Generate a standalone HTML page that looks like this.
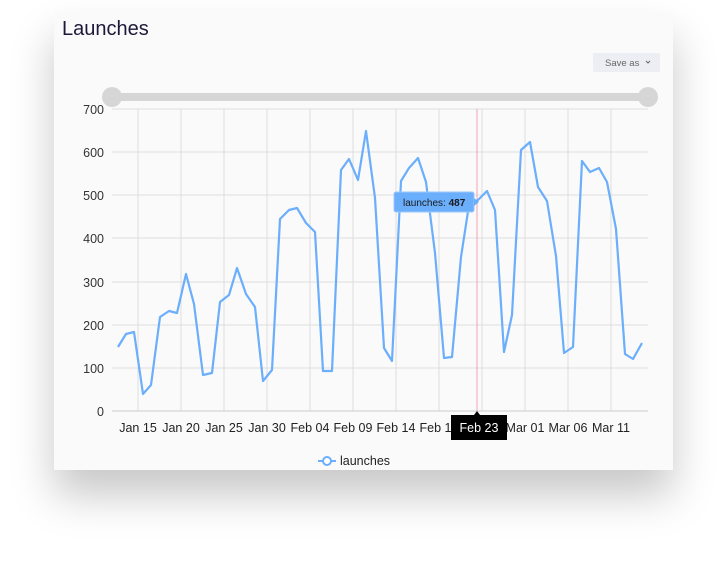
<!DOCTYPE html>
<html><head><style>
body{margin:0;width:728px;height:566px;background:#fff;font-family:"Liberation Sans",sans-serif;overflow:hidden}
.card{position:absolute;left:54px;top:12px;width:619px;height:458px;background:#fafafa;box-shadow:0 25px 40px rgba(0,0,0,0.22)}
</style></head><body>
<div class="card"></div>
<svg width="728" height="566" style="position:absolute;left:0;top:0" font-family="Liberation Sans, sans-serif">
<text x="62" y="35" font-size="20" fill="#1e1838">Launches</text>
<rect x="593" y="53" width="67" height="19" rx="2" fill="#eceef3"/>
<text x="605" y="66" font-size="9.5" fill="#666">Save as</text>
<path d="M646 61l2 2 2-2" stroke="#666" fill="none"/>
<g stroke="#ddd" stroke-width="1">
<line x1="112" y1="109" x2="648" y2="109"/><line x1="112" y1="152" x2="648" y2="152"/><line x1="112" y1="195" x2="648" y2="195"/><line x1="112" y1="238" x2="648" y2="238"/><line x1="112" y1="282" x2="648" y2="282"/><line x1="112" y1="325" x2="648" y2="325"/><line x1="112" y1="368" x2="648" y2="368"/>
<line x1="138" y1="109" x2="138" y2="411"/><line x1="181" y1="109" x2="181" y2="411"/><line x1="224" y1="109" x2="224" y2="411"/><line x1="267" y1="109" x2="267" y2="411"/><line x1="310" y1="109" x2="310" y2="411"/><line x1="353" y1="109" x2="353" y2="411"/><line x1="396" y1="109" x2="396" y2="411"/><line x1="439" y1="109" x2="439" y2="411"/><line x1="482" y1="109" x2="482" y2="411"/><line x1="525" y1="109" x2="525" y2="411"/><line x1="568" y1="109" x2="568" y2="411"/><line x1="611" y1="109" x2="611" y2="411"/>
</g>
<line x1="112" y1="411" x2="648" y2="411" stroke="#ccc"/>
<rect x="112" y="93" width="536" height="8" fill="#d6d6d6"/>
<circle cx="112" cy="97" r="10" fill="#d6d6d6"/><circle cx="648" cy="97" r="10" fill="#d6d6d6"/>
<g font-size="12.5" fill="#333" text-anchor="end">
<text x="104" y="114">700</text><text x="104" y="157">600</text><text x="104" y="200">500</text><text x="104" y="243">400</text><text x="104" y="287">300</text><text x="104" y="330">200</text><text x="104" y="373">100</text><text x="104" y="416">0</text>
</g>
<g font-size="12.5" fill="#222" text-anchor="middle">
<text x="138" y="432">Jan 15</text><text x="181" y="432">Jan 20</text><text x="224" y="432">Jan 25</text><text x="267" y="432">Jan 30</text><text x="310" y="432">Feb 04</text><text x="353" y="432">Feb 09</text><text x="396" y="432">Feb 14</text><text x="439" y="432">Feb 19</text><text x="525" y="432">Mar 01</text><text x="568" y="432">Mar 06</text><text x="611" y="432">Mar 11</text>
</g>
<line x1="477" y1="109" x2="477" y2="411" stroke="#f4a0b4"/>
<polyline fill="none" stroke="#6aaefc" stroke-width="2.2" stroke-linejoin="round" points="118,347 126,334 134,332 143,394 151,385 160,317 169,311 177,313 186,274 194,304 203,375 212,373 220,302 229,295 237,268 246,294 255,307 263,381 272,370 280,219 289,210 297,208 306,223 315,232 323,371 332,371 341,170 349,159 358,180 366,131 375,198 384,348 392,361 401,181 409,168 418,158 426,182 435,253 444,358 452,357 461,257 469,205 478,200 487,191 495,210 504,352 512,315 521,150 530,142 538,187 547,201 556,256 564,353 573,347 582,161 590,172 599,168 607,182 616,229 625,354 633,359 642,343"/>
<rect x="394" y="192" width="80" height="20" rx="2" fill="#6aaefc" stroke="#9cc8fb"/>
<path d="M474 198l5 4-5 4z" fill="#6aaefc"/>
<text x="403" y="206" font-size="10" fill="#1a1a1a">launches: <tspan font-weight="bold">487</tspan></text>
<rect x="451" y="415" width="56" height="25" fill="#000"/>
<path d="M474 415l3-4 3 4z" fill="#000"/>
<text x="479" y="432" font-size="12.5" fill="#fff" text-anchor="middle">Feb 23</text>
<line x1="318" y1="461" x2="336" y2="461" stroke="#6aaefc" stroke-width="2"/>
<circle cx="327" cy="461" r="4" fill="#fff" stroke="#6aaefc" stroke-width="2"/>
<text x="340" y="465" font-size="12.5" fill="#222">launches</text>
</svg>
</body></html>
